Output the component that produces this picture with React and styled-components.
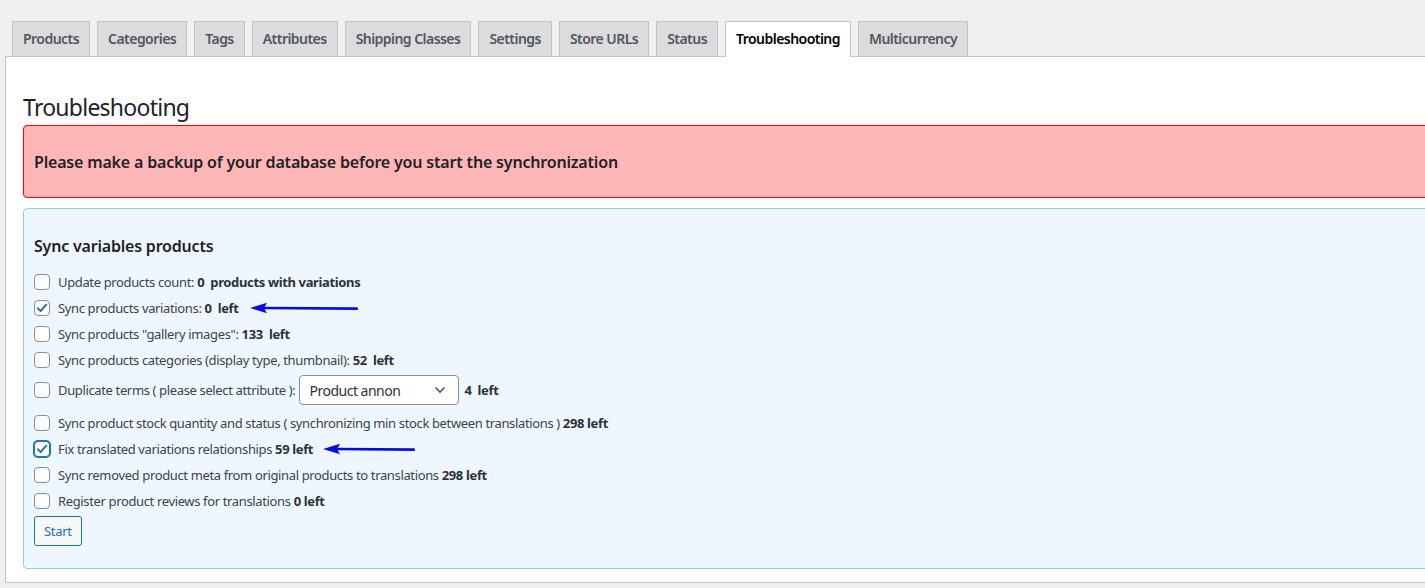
import React from "react";
import styled, { createGlobalStyle, css } from "styled-components";

const GlobalStyle = createGlobalStyle`
  html, body {
    margin: 0;
    padding: 0;
    background: #f0f0f1;
    overflow: hidden;
  }
  body {
    font-family: "Noto Sans", "Open Sans", sans-serif;
    color: #3c434a;
    font-size: 13px;
  }
`;

const Page = styled.div`
  padding: 21px 0 0 5px;
  height: 588px;
  box-sizing: border-box;
`;

const TabBar = styled.nav`
  display: flex;
  padding-left: 7px;
  gap: 7px;
  position: relative;
  z-index: 1;
`;

const Tab = styled.a`
  display: block;
  padding: 5px 10px;
  font-size: 14px;
  line-height: 24px;
  font-weight: 600;
  letter-spacing: -0.54px;
  color: #50575e;
  background: #dcdcde;
  border: 1px solid #c3c4c7;
  border-bottom: none;
  text-decoration: none;
  white-space: nowrap;
  ${props =>
    props.active &&
    css`
      background: #fff;
      color: #000;
      padding-bottom: 6px;
      margin-bottom: -1px;
    `}
`;

const Panel = styled.div`
  background: #fff;
  border: 1px solid #c3c4c7;
  width: 1440px;
  height: 527px;
  box-sizing: border-box;
  padding: 0 0 0 17px;
`;

const Title = styled.h1`
  margin: 0;
  padding: 36px 0 3px;
  font-size: 23px;
  font-weight: 400;
  line-height: 29px;
  letter-spacing: -0.75px;
  color: #1d2327;
`;

const Notice = styled.div`
  background: #ffb6b6;
  border: 1px solid #ff0000;
  border-radius: 4px;
  padding: 26px 10px 24px;
  font-size: 16px;
  line-height: 21px;
  font-weight: 600;
  letter-spacing: -0.18px;
  color: #1d2327;
  margin-bottom: 10px;
`;

const SyncBox = styled.div`
  background: #eef7fe;
  border: 1px solid #8fcfe8;
  border-radius: 4px;
  padding: 0 10px 22px;
  letter-spacing: -0.36px;
`;

const BoxTitle = styled.h3`
  margin: 0;
  padding: 26px 0 12px;
  font-size: 16px;
  line-height: 22px;
  font-weight: 600;
  letter-spacing: -0.2px;
  color: #1d2327;
`;

const Row = styled.label`
  display: flex;
  align-items: center;
  height: ${props => (props.tall ? "34px" : "26px")};
  margin-bottom: ${props => (props.tall ? "3px" : "0")};
  white-space: nowrap;
  color: #3c434a;
`;

const Box = styled.span`
  width: 16px;
  height: 16px;
  box-sizing: border-box;
  border: 1px solid ${props => (props.focus ? "#2271b1" : "#8c8f94")};
  border-radius: 4px;
  background: #fff;
  margin-right: 8px;
  display: flex;
  align-items: center;
  justify-content: center;
  flex: none;
  ${props =>
    props.focus &&
    css`
      box-shadow: 0 0 0 1px #2271b1;
    `}
`;

const Strong = styled.b`
  font-weight: 700;
  color: #2c3338;
`;

const SelectBox = styled.div`
  display: flex;
  align-items: center;
  justify-content: space-between;
  width: 160px;
  height: 30px;
  box-sizing: border-box;
  border: 1px solid #8c8f94;
  border-radius: 4px;
  background: #fff;
  padding: 0 12px 0 9px;
  margin: 0 5px 0 4px;
  font-size: 14px;
  letter-spacing: -0.5px;
  color: #2c3338;
`;

const StartButton = styled.button`
  margin-top: 2px;
  font-family: inherit;
  font-size: 13px;
  letter-spacing: -0.3px;
  line-height: 26px;
  padding: 1px 9px;
  color: #2271b1;
  background: #f6f7f7;
  border: 1px solid #2271b1;
  border-radius: 3px;
`;

const Check = () => (
  <svg width="12" height="12" viewBox="0 0 12 12">
    <path d="M1.8 6.3 L4.6 9 L10.3 2.6" fill="none" stroke="#2271b1" strokeWidth="1.9" strokeLinecap="round" strokeLinejoin="round" />
  </svg>
);

const Chevron = () => (
  <svg width="12" height="8" viewBox="0 0 12 8">
    <path d="M1.5 1.5 L6 6 L10.5 1.5" fill="none" stroke="#50575e" strokeWidth="1.6" />
  </svg>
);

const Arrow = ({ width, gap }) => (
  <svg width={width} height="12" viewBox={`0 0 ${width} 12`} style={{ marginLeft: gap }}>
    <path d={`M14 6 L${width - 1} 6.6`} stroke="#0a0ae6" strokeWidth="2.6" strokeLinecap="round" />
    <path d="M0 6 L17 0.8 L14 6.2 L17 11.2 Z" fill="#0a0ae6" />
  </svg>
);

const tabs = [
  "Products",
  "Categories",
  "Tags",
  "Attributes",
  "Shipping Classes",
  "Settings",
  "Store URLs",
  "Status",
  "Troubleshooting",
  "Multicurrency"
];

const Item = ({ checked, focus, children, tall }) => (
  <Row tall={tall}>
    <Box focus={focus}>{checked && <Check />}</Box>
    {children}
  </Row>
);

export default function App() {
  return (
    <Page>
      <GlobalStyle />
      <TabBar>
        {tabs.map(t => (
          <Tab key={t} active={t === "Troubleshooting"}>
            {t}
          </Tab>
        ))}
      </TabBar>
      <Panel>
        <Title>Troubleshooting</Title>
        <Notice>Please make a backup of your database before you start the synchronization</Notice>
        <SyncBox>
          <BoxTitle>Sync variables products</BoxTitle>
          <Item>
            Update products count:&nbsp;<Strong>0</Strong>&nbsp;&nbsp;<Strong>products with variations</Strong>
          </Item>
          <Item checked>
            Sync products variations:&nbsp;<Strong>0</Strong>&nbsp;&nbsp;<Strong>left</Strong>
            <Arrow width={108} gap={11} />
          </Item>
          <Item>
            Sync products "gallery images":&nbsp;<Strong>133</Strong>&nbsp;&nbsp;<Strong>left</Strong>
          </Item>
          <Item>
            Sync products categories (display type, thumbnail):&nbsp;<Strong>52</Strong>&nbsp;&nbsp;<Strong>left</Strong>
          </Item>
          <Item tall>
            Duplicate terms ( please select attribute ):
            <SelectBox>
              Product annon
              <Chevron />
            </SelectBox>
            <Strong>4</Strong>&nbsp;&nbsp;<Strong>left</Strong>
          </Item>
          <Item>
            Sync product stock quantity and status ( synchronizing min stock between translations )&nbsp;<Strong>298 left</Strong>
          </Item>
          <Item checked focus>
            Fix translated variations relationships&nbsp;<Strong>59 left</Strong>
            <Arrow width={92} gap={10} />
          </Item>
          <Item>
            Sync removed product meta from original products to translations&nbsp;<Strong>298 left</Strong>
          </Item>
          <Item>
            Register product reviews for translations&nbsp;<Strong>0 left</Strong>
          </Item>
          <StartButton>Start</StartButton>
        </SyncBox>
      </Panel>
    </Page>
  );
}
